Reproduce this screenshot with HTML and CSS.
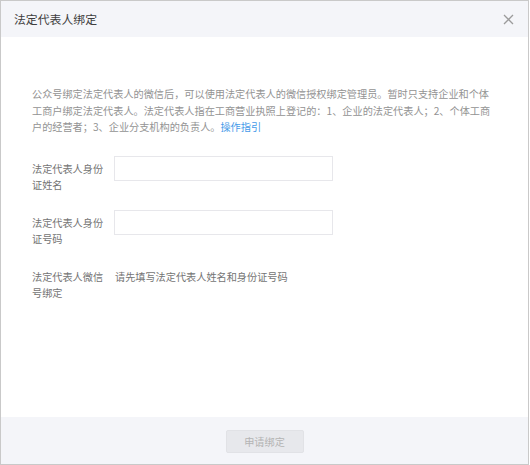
FILE: index.html
```html
<!DOCTYPE html>
<html lang="zh-CN">
<head>
<meta charset="utf-8">
<title>法定代表人绑定</title>
<link rel="stylesheet" href="styles.css">
</head>
<body>
<div class="dialog">
  <div class="dialog-hd">
    <h3 class="dialog-title">法定代表人绑定</h3>
    <span class="dialog-close" aria-label="关闭">
      <svg width="11" height="11" viewBox="0 0 11 11"><path d="M1 1L10 10M10 1L1 10" stroke="#9b9b9b" stroke-width="1.3" fill="none"/></svg>
    </span>
  </div>
  <div class="dialog-bd">
    <p class="tips">公众号绑定法定代表人的微信后，可以使用法定代表人的微信授权绑定管理员。暂时只支持企业和个体工商户绑定法定代表人。法定代表人指在工商营业执照上登记的：1、企业的法定代表人；2、个体工商户的经营者；3、企业分支机构的负责人。<a class="link" href="#">操作指引</a></p>
    <div class="form">
      <div class="form-row">
        <label class="form-label">法定代表人身份证姓名</label>
        <input class="form-input" type="text">
      </div>
      <div class="form-row">
        <label class="form-label">法定代表人身份证号码</label>
        <input class="form-input" type="text">
      </div>
      <div class="form-row">
        <label class="form-label">法定代表人微信号绑定</label>
        <span class="form-value">请先填写法定代表人姓名和身份证号码</span>
      </div>
    </div>
  </div>
  <div class="dialog-ft">
    <button class="btn-disabled" type="button" disabled>申请绑定</button>
  </div>
</div>
</body>
</html>
```

FILE: styles.css
```css
* { box-sizing: border-box; }
html, body { margin: 0; padding: 0; background: #fff; }
body {
  font-family: "Noto Sans CJK SC", "Noto Sans", "Liberation Sans", sans-serif;
  font-size: 10.16px;
}
.dialog {
  width: 529px;
  height: 465px;
  border: 1px solid #c9c9c9;
  display: flex;
  flex-direction: column;
  background: #fff;
}
.dialog-hd {
  height: 36px;
  background: #f4f5f9;
  display: flex;
  align-items: center;
  justify-content: space-between;
  padding: 0 14px 0 13px;
}
.dialog-title {
  margin: 0;
  font-weight: normal;
  font-size: 11.86px;
  color: #3e3e3e;
  line-height: 16px;
}
.dialog-close {
  display: flex;
  width: 11px;
  height: 11px;
  margin-top: 1px;
}
.dialog-bd {
  flex: 1;
  padding: 49px 31px 0;
}
.tips {
  margin: 0;
  width: 463px;
  line-height: 16.5px;
  color: #939393;
}
.link {
  color: #459ae9;
  text-decoration: none;
}
.form { margin-top: 20px; }
.form-row {
  display: flex;
  align-items: flex-start;
  margin-bottom: 17px;
}
.form-label {
  width: 76px;
  margin-right: 6px;
  padding-top: 5px;
  line-height: 16px;
  color: #747474;
}
.form-input {
  width: 219px;
  height: 25px;
  border: 1px solid #e7e7eb;
  background: #fff;
  margin: 0;
  padding: 0 6px;
  outline: none;
}
.form-value {
  padding-top: 5px;
  line-height: 16px;
  margin-left: 1px;
  color: #747474;
}
.dialog-ft {
  height: 47px;
  background: #f4f5f9;
  display: flex;
  align-items: center;
  justify-content: center;
}
.btn-disabled {
  width: 78px;
  height: 23px;
  margin-top: 1px;
  border: 1px solid #e1e2e6;
  background: #e7e8ec;
  color: #b4b4b4;
  font-family: inherit;
  font-size: 10.16px;
  padding: 0;
  border-radius: 2px;
}
```
